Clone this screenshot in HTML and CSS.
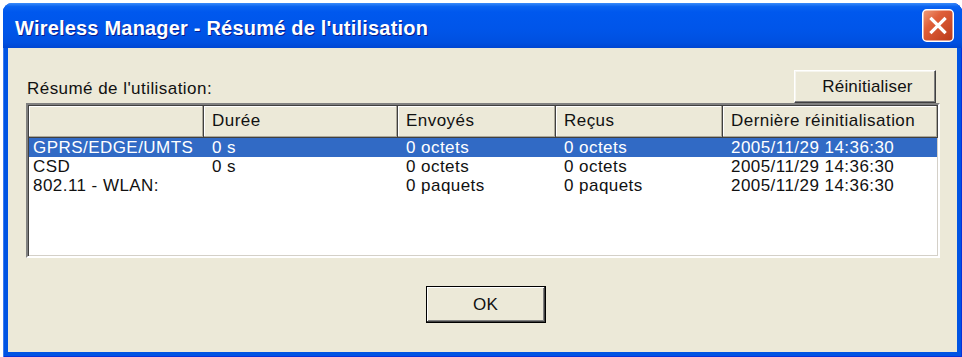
FILE: index.html
```html
<!DOCTYPE html>
<html lang="fr">
  <head>
    <meta charset="UTF-8" />
    <meta name="viewport" content="width=device-width, initial-scale=1.0" />
    <title>Wireless Manager - Résumé de l'utilisation</title>
    <link rel="stylesheet" href="styles.css">
  </head>
  <body>
    <div class="window">
      <div class="titlebar">
        <span class="title">Wireless Manager - Résumé de l'utilisation</span>
        <button class="close" aria-label="Fermer">
          <svg width="32" height="33" viewBox="0 0 32 33">
            <defs>
              <linearGradient id="closeFill" x1="0" y1="0" x2="1" y2="1">
                <stop offset="0" stop-color="#f0a07e" />
                <stop offset="0.35" stop-color="#e0603a" />
                <stop offset="1" stop-color="#b83818" />
              </linearGradient>
            </defs>
            <rect x="0.75" y="0.75" width="30.5" height="31.5" rx="4" fill="url(#closeFill)" stroke="#fff" stroke-width="1.5" />
            <path d="M9.5 10 L22.5 23 M22.5 10 L9.5 23" stroke="#fff" stroke-width="3.2" stroke-linecap="square" />
          </svg>
        </button>
      </div>

      <div class="client">
        <div class="toolbar">
          <span class="label">Résumé de l'utilisation:</span>
          <button class="btn reset">Réinitialiser</button>
        </div>

        <div class="listview">
          <div class="lv-head">
            <div class="hcell"></div>
            <div class="hcell">Durée</div>
            <div class="hcell">Envoyés</div>
            <div class="hcell">Reçus</div>
            <div class="hcell">Dernière réinitialisation</div>
          </div>
          <div class="lv-row selected">
            <div class="cell first">GPRS/EDGE/UMTS</div>
            <div class="cell">0 s</div>
            <div class="cell">0 octets</div>
            <div class="cell">0 octets</div>
            <div class="cell">2005/11/29 14:36:30</div>
          </div>
          <div class="lv-row">
            <div class="cell first">CSD</div>
            <div class="cell">0 s</div>
            <div class="cell">0 octets</div>
            <div class="cell">0 octets</div>
            <div class="cell">2005/11/29 14:36:30</div>
          </div>
          <div class="lv-row">
            <div class="cell first">802.11 - WLAN:</div>
            <div class="cell"></div>
            <div class="cell">0 paquets</div>
            <div class="cell">0 paquets</div>
            <div class="cell">2005/11/29 14:36:30</div>
          </div>
        </div>

        <div class="footer">
          <button class="btn ok">OK</button>
        </div>
      </div>
    </div>
  </body>
</html>
```

FILE: styles.css
```css
body {
  margin: 0;
  background-color: #fff;
  font-family: "Liberation Sans", Arial, sans-serif;
  font-size: 17px;
  letter-spacing: 0.45px;
  color: #111;
}
.window {
  margin: 3px 0 0 3px;
  width: 959px;
  height: 354px;
  display: flex;
  flex-direction: column;
  background-color: #0054e3;
  border-radius: 9px 9px 0 0;
  box-shadow: inset 1px 0 #3c7cf0, inset -1px 0 #0831d9, inset 0 -1px #0831d9;
}
.titlebar {
  height: 45px;
  flex: none;
  display: flex;
  align-items: center;
  justify-content: space-between;
  padding: 0 8px 0 12px;
  border-radius: 9px 9px 0 0;
  background: linear-gradient(
    #3a8cfa 0,
    #0a63f0 8%,
    #0058ee 20%,
    #0055e9 60%,
    #0050e0 88%,
    #0046d2 100%
  );
}
.title {
  color: #fff;
  font-weight: bold;
  font-size: 20px;
  letter-spacing: 0.2px;
  text-shadow: 1px 1px #0a1c8a;
  margin-top: 6px;
}
.close {
  width: 32px;
  height: 33px;
  padding: 0;
  border: 0;
  background: none;
  display: block;
}
.close svg {
  display: block;
}
.client {
  flex: 1;
  margin: 0 5px 5px 5px;
  padding: 22px 17px 0 18px;
  background-color: #ece9d8;
  display: flex;
  flex-direction: column;
}
.toolbar {
  height: 33px;
  display: flex;
  align-items: center;
  justify-content: space-between;
}
.label {
  padding-left: 1px;
  margin-top: 4px;
}
.btn {
  font-family: inherit;
  font-size: 17px;
  letter-spacing: 0.2px;
  color: #111;
  background-color: #ece9d8;
  border: 1px solid;
  border-color: #fff #404040 #404040 #fff;
  box-shadow: inset -1px -1px #808080, inset 1px 1px #f6f5ee;
  padding: 0;
}
.reset {
  width: 142px;
  height: 33px;
  margin-right: 4px;
  padding-left: 5px;
}
.listview {
  height: 155px;
  box-sizing: border-box;
  border: 2px solid;
  border-color: #808080 #fff #fff #808080;
  box-shadow: inset 1px 1px #404040, inset -1px -1px #d4d0c8;
  background-color: #fff;
  padding: 1px;
}
.lv-head,
.lv-row {
  display: grid;
  grid-template-columns: 175px 194px 158px 167px 215px;
}
.hcell {
  height: 32px;
  box-sizing: border-box;
  padding: 5px 0 0 8px;
  background-color: #ece9d8;
  border-right: 1px solid #404040;
  border-bottom: 1px solid #404040;
  box-shadow: inset -1px -1px #aca899, inset 1px 1px #fff;
  white-space: nowrap;
}
.lv-row {
  height: 19px;
  line-height: 19px;
}
.cell {
  padding-left: 8px;
  white-space: nowrap;
}
.cell.first {
  padding-left: 4px;
}
.lv-row.selected {
  background-color: #316ac5;
  color: #fff;
}
.footer {
  margin-top: 28px;
  display: flex;
  justify-content: center;
  padding-left: 5px;
}
.ok {
  width: 120px;
  height: 37px;
  border: 1px solid #000;
  box-shadow: inset -1px -1px #404040, inset 1px 1px #fff, inset -2px -2px #808080;
}
```
